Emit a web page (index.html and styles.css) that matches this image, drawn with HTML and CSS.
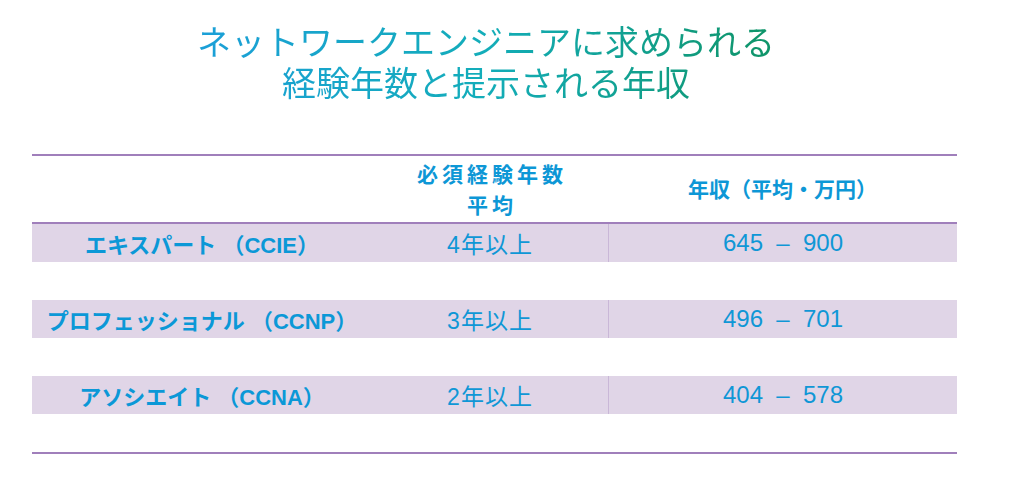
FILE: index.html
```html
<!DOCTYPE html>
<html lang="ja">
<head>
<meta charset="utf-8">
<title>ネットワークエンジニアに求められる経験年数と提示される年収</title>
<link rel="stylesheet" href="styles.css">
</head>
<body>
<div class="page">
  <div class="title">
    <h1 class="title-text">ネットワークエンジニアに求められる<br>経験年数と提示される年収</h1>
  </div>
  <div class="table">
    <div class="head">
      <div class="cell"></div>
      <div class="cell h-exp">必須経験年数<br>平均</div>
      <div class="cell h-pay">年収（平均・万円）</div>
    </div>
    <div class="body">
      <div class="row">
        <div class="cell name">エキスパート （CCIE）</div>
        <div class="cell exp">4年以上</div>
        <div class="cell pay">645  –  900</div>
      </div>
      <div class="row">
        <div class="cell name">プロフェッショナル （CCNP）</div>
        <div class="cell exp">3年以上</div>
        <div class="cell pay">496  –  701</div>
      </div>
      <div class="row">
        <div class="cell name">アソシエイト （CCNA）</div>
        <div class="cell exp">2年以上</div>
        <div class="cell pay">404  –  578</div>
      </div>
    </div>
  </div>
</div>
</body>
</html>
```

FILE: styles.css
```css
* { box-sizing: border-box; }

html, body {
  margin: 0;
  padding: 0;
  background: #ffffff;
}

body {
  font-family: "Liberation Sans", "Noto Sans CJK JP", sans-serif;
  color: #0f97d6;
}

.page {
  width: 925px;
  margin-left: 32px;
  padding-top: 20px;
}

.title {
  text-align: center;
  padding-right: 17px;
  margin-bottom: 52px;
}

.title-text {
  display: inline-block;
  margin: 0;
  font-family: "Noto Sans CJK JP", sans-serif;
  font-weight: 400;
  font-size: 34px;
  line-height: 41px;
  letter-spacing: 0;
  background: linear-gradient(90deg, #1b9fd8 0%, #13adb9 50%, #0f9467 100%);
  -webkit-background-clip: text;
  background-clip: text;
  color: transparent;
}

.head,
.row {
  display: grid;
  grid-template-columns: 340px 236px 349px;
  text-align: center;
}

.head {
  height: 70px;
  border-top: 2px solid #a07fbb;
  border-bottom: 2px solid #a07fbb;
  align-items: center;
  font-weight: bold;
  font-size: 21px;
  line-height: 31px;
  color: #0d97d6;
}

.h-exp {
  letter-spacing: 4px;
  padding-left: 4px;
  padding-top: 2px;
}

.body {
  display: flex;
  flex-direction: column;
  gap: 38px;
  padding-bottom: 38px;
  border-bottom: 2px solid #a07fbb;
}

.row {
  height: 38px;
  background: #e0d5e7;
  align-items: stretch;
}

.row .cell {
  display: flex;
  align-items: center;
  justify-content: center;
}

.name {
  font-weight: bold;
  font-size: 22px;
  color: #0b98d7;
}

.exp {
  font-size: 23px;
  letter-spacing: 1px;
}

.pay {
  font-size: 24px;
  white-space: pre;
  border-left: 1px solid #c9b7d7;
}
```
